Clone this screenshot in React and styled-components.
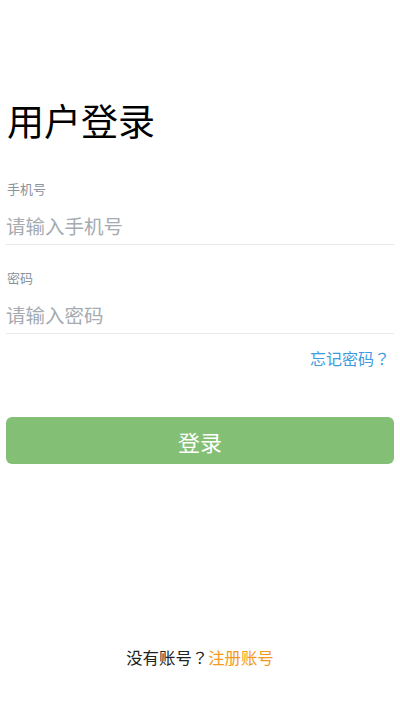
import React from 'react';
import styled, {createGlobalStyle} from 'styled-components';

const GlobalStyle = createGlobalStyle`
  html, body {
    margin: 0;
    padding: 0;
    background: #fff;
    font-family: "Noto Sans CJK SC", "Noto Sans", sans-serif;
  }
`;

const Page = styled.div`
  width: 400px;
  height: 710px;
  display: flex;
  flex-direction: column;
  padding: 0 6px;
  box-sizing: border-box;
`;

const Title = styled.h1`
  margin: 94px 0 0 1px;
  font-size: 37px;
  font-weight: 400;
  line-height: 52px;
  color: #000;
`;

const Field = styled.div`
  display: flex;
  flex-direction: column;
  border-bottom: 1px solid #e8e8e8;
  margin-top: ${p => p.top}px;
`;

const Label = styled.label`
  font-size: 13px;
  line-height: 18px;
  color: #8a929b;
  margin-left: 1px;
`;

const Input = styled.input`
  border: none;
  outline: none;
  padding: 0;
  margin-top: 8px;
  height: 38px;
  font-family: inherit;
  font-size: 19.5px;
  background: transparent;
  color: #333;
  &::placeholder {
    color: #a5abb1;
  }
`;

// centred full-width question mark
const Punct = styled.span`
  font-family: "Noto Sans CJK TC", sans-serif;
`;

const Forgot = styled.a`
  align-self: flex-end;
  margin: 12px 4px 0 0;
  font-size: 16px;
  line-height: 24px;
  color: #3d9be0;
  text-decoration: none;
`;

const Button = styled.button`
  margin-top: 47px;
  height: 47px;
  width: 100%;
  border: none;
  border-radius: 6px;
  background: #84bf76;
  color: #fff;
  font-family: inherit;
  font-size: 22px;
`;

const Footer = styled.div`
  margin-top: auto;
  margin-bottom: 41px;
  text-align: center;
  font-size: 16.4px;
  line-height: 24px;
  color: #222;
  span.link {
    color: #f39a1e;
  }
`;

const App = () => {
  return (
    <Page>
      <GlobalStyle />
      <Title>用户登录</Title>
      <Field top={34}>
        <Label>手机号</Label>
        <Input placeholder='请输入手机号' />
      </Field>
      <Field top={24}>
        <Label>密码</Label>
        <Input type='password' placeholder='请输入密码' />
      </Field>
      <Forgot>忘记密码<Punct>？</Punct></Forgot>
      <Button>登录</Button>
      <Footer>没有账号<Punct>？</Punct><span className='link'>注册账号</span></Footer>
    </Page>
  );
}

export default App;
